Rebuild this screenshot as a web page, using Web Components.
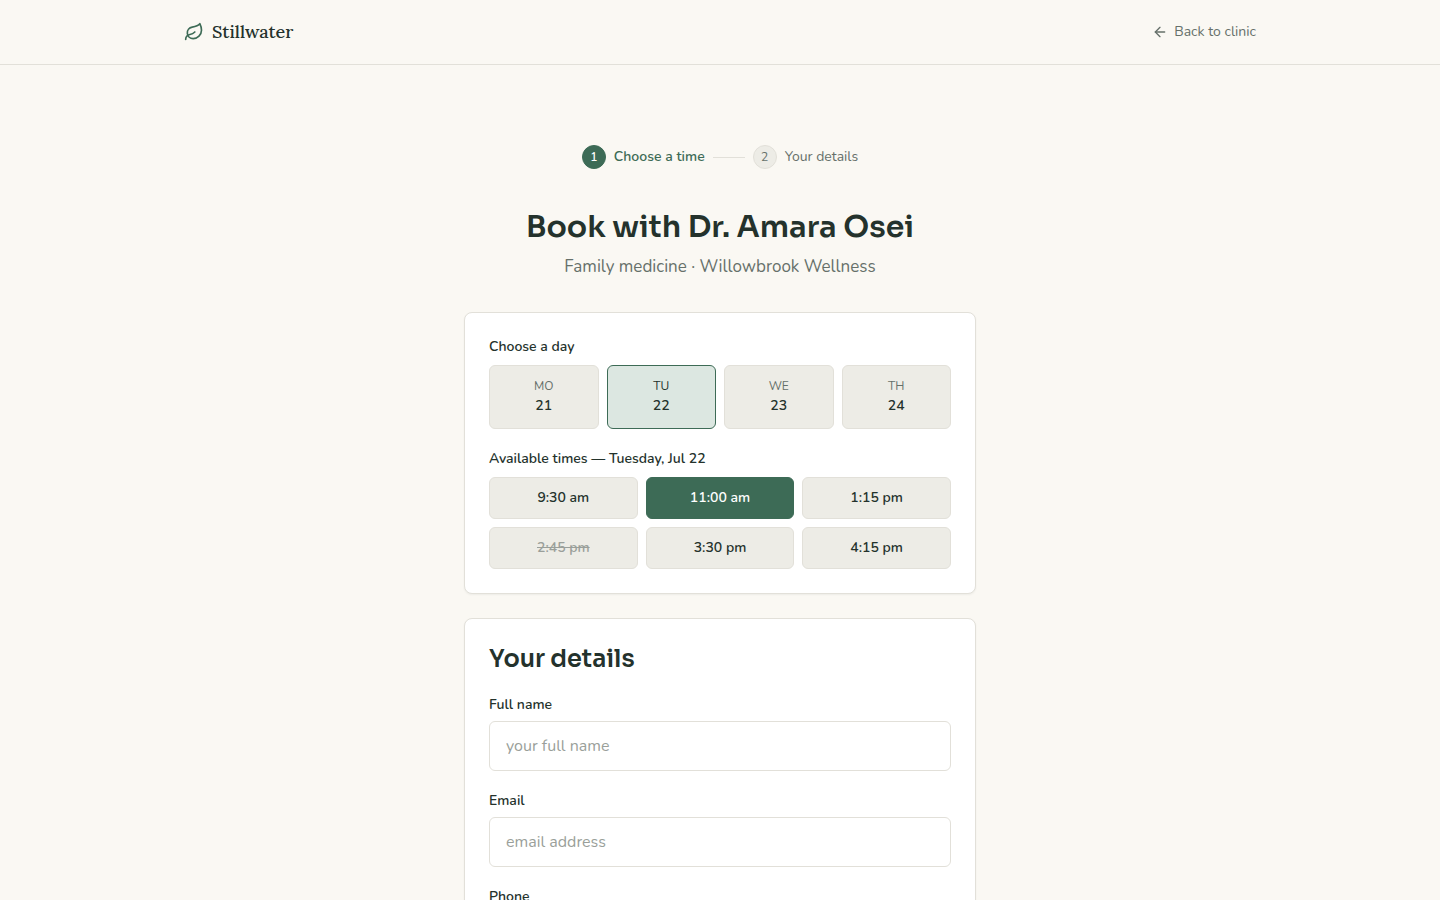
<!DOCTYPE html>
<html lang="en">
<head>
<meta charset="utf-8">
<meta name="viewport" content="width=device-width, initial-scale=1">
<title>Book with Dr. Amara Osei · Stillwater</title>
<style>
:root {
  --bg: #faf8f3;
  --card: #ffffff;
  --line: #e2e0d9;
  --soft: #edece6;
  --ink: #24322c;
  --muted: #66706a;
  --faint: #9a9f9a;
  --green: #3d6b56;
  --tint: #dce7e1;
  --body-font: Nunito, Lato, sans-serif;
  --head-font: Sora, Inter, sans-serif;
  --logo-font: Lora, "Liberation Serif", serif;
}
body {
  margin: 0;
  background: var(--bg);
  color: var(--ink);
  font: 400 14px/20px var(--body-font);
}
</style>
</head>
<body>
<booking-page></booking-page>

<template id="site-header">
  <style>
    :host { display: block; border-bottom: 1px solid var(--line); }
    header { display: flex; align-items: center; justify-content: space-between; box-sizing: border-box; max-width: 1120px; height: 64px; margin: 0 auto; padding: 0 24px; }
    a { display: flex; align-items: center; gap: 8px; color: inherit; text-decoration: none; }
    .logo { font: 500 18px/28px var(--logo-font); }
    .logo svg { color: var(--green); }
    .back { gap: 6px; color: var(--muted); font-size: 14px; }
    svg { display: block; fill: none; stroke: currentColor; stroke-width: 2; stroke-linecap: round; stroke-linejoin: round; }
  </style>
  <header>
    <a class="logo" href="#">
      <svg width="20" height="20" viewBox="0 0 24 24" aria-hidden="true"><path d="M11 20A7 7 0 0 1 9.8 6.1C15.5 5 17 4.48 19 2c1 2 2 4.18 2 8 0 5.5-4.78 10-10 10Z"/><path d="M2 21c0-3 1.85-5.36 5.08-6C9.5 14.52 12 13 13 12"/></svg>
      <span>Stillwater</span>
    </a>
    <a class="back" href="#">
      <svg width="16" height="16" viewBox="0 0 24 24" aria-hidden="true"><path d="m12 19-7-7 7-7"/><path d="M19 12H5"/></svg>
      <span>Back to clinic</span>
    </a>
  </header>
</template>

<template id="step-item">
  <style>
    :host { display: flex; align-items: center; gap: 8px; color: var(--muted); }
    .dot { display: grid; place-items: center; box-sizing: border-box; width: 24px; height: 24px; border: 1px solid var(--line); border-radius: 50%; background: var(--soft); font-size: 12px; line-height: 16px; }
    :host([current]) { color: var(--green); font-weight: 600; }
    :host([current]) .dot { background: var(--green); border-color: var(--green); color: #fff; }
  </style>
  <span class="dot"></span><slot></slot>
</template>

<template id="panel-card">
  <style>
    :host { display: flex; flex-direction: column; gap: 20px; padding: 24px; border: 1px solid var(--line); border-radius: 8px; background: var(--card); box-shadow: 0 1px 2px rgba(36, 50, 44, .06); }
  </style>
  <slot></slot>
</template>

<template id="option-group">
  <style>
    :host { display: block; }
    .label { margin-bottom: 8px; font-weight: 600; }
    .grid { display: grid; grid-template-columns: repeat(var(--columns, 3), minmax(0, 1fr)); gap: 8px; }
  </style>
  <div class="label" id="label"></div>
  <div class="grid" role="group" aria-labelledby="label"><slot></slot></div>
</template>

<template id="day-option">
  <style>
    :host { display: block; }
    button { display: flex; flex-direction: column; align-items: center; justify-content: center; gap: 2px; width: 100%; height: 64px; padding: 0; border: 1px solid var(--line); border-radius: 6px; background: var(--soft); color: inherit; font: inherit; cursor: pointer; }
    .day { color: var(--muted); font-size: 12px; line-height: 16px; }
    .date { font-weight: 600; font-size: 14px; line-height: 20px; }
    button[aria-pressed="true"] { border-color: var(--green); background: var(--tint); }
    button[aria-pressed="true"] .day { color: var(--ink); }
  </style>
  <button type="button"><span class="day"></span><span class="date"></span></button>
</template>

<template id="time-option">
  <style>
    :host { display: block; }
    button { width: 100%; height: 42px; padding: 0; border: 1px solid var(--line); border-radius: 6px; background: var(--soft); color: inherit; font: inherit; font-weight: 600; cursor: pointer; }
    button[aria-pressed="true"] { border-color: var(--green); background: var(--green); color: #fff; }
    button:disabled { color: var(--faint); text-decoration: line-through; cursor: not-allowed; }
  </style>
  <button type="button"><slot></slot></button>
</template>

<template id="text-field">
  <style>
    :host { display: flex; flex-direction: column; gap: 6px; }
    label { font-weight: 600; }
    input { box-sizing: border-box; width: 100%; height: 50px; padding: 0 16px; border: 1px solid var(--line); border-radius: 6px; background: var(--card); color: var(--ink); font: 400 16px/24px var(--body-font); }
    input::placeholder { color: var(--faint); opacity: 1; }
  </style>
  <label for="field"></label><input id="field">
</template>

<template id="booking-page">
  <style>
    :host { display: block; }
    main { display: flex; flex-direction: column; gap: 24px; box-sizing: border-box; max-width: 560px; margin: 0 auto; padding: 80px 24px; }
    .intro { display: flex; flex-direction: column; gap: 8px; margin-bottom: 8px; text-align: center; }
    .steps { display: flex; align-items: center; justify-content: center; gap: 8px; margin-bottom: 32px; }
    .rule { width: 32px; height: 1px; background: var(--line); }
    h1, h2, p { margin: 0; }
    h1 { font: 600 30px/36px var(--head-font); }
    h2 { font: 600 24px/32px var(--head-font); }
    p { color: var(--muted); font-size: 17px; line-height: 27px; }
  </style>
  <site-header></site-header>
  <main>
    <div class="intro">
      <div class="steps">
        <step-item number="1" current>Choose a time</step-item>
        <span class="rule"></span>
        <step-item number="2">Your details</step-item>
      </div>
      <h1>Book with Dr. Amara Osei</h1>
      <p>Family medicine · Willowbrook Wellness</p>
    </div>
    <panel-card>
      <option-group label="Choose a day" columns="4">
        <day-option day="MO" date="21"></day-option>
        <day-option day="TU" date="22" selected></day-option>
        <day-option day="WE" date="23"></day-option>
        <day-option day="TH" date="24"></day-option>
      </option-group>
      <option-group label="Available times — Tuesday, Jul 22" columns="3">
        <time-option>9:30 am</time-option>
        <time-option selected>11:00 am</time-option>
        <time-option>1:15 pm</time-option>
        <time-option disabled>2:45 pm</time-option>
        <time-option>3:30 pm</time-option>
        <time-option>4:15 pm</time-option>
      </option-group>
    </panel-card>
    <panel-card>
      <h2>Your details</h2>
      <text-field label="Full name" placeholder="your full name" type="text"></text-field>
      <text-field label="Email" placeholder="email address" type="email"></text-field>
      <text-field label="Phone" type="tel"></text-field>
    </panel-card>
  </main>
</template>

<script>
class TemplateElement extends HTMLElement {
  connectedCallback() {
    if (this.shadowRoot) return;
    const root = this.attachShadow({ mode: "open" });
    root.append(document.getElementById(this.localName).content.cloneNode(true));
    this.setup(root);
  }
  setup() {}
}
class SiteHeader extends TemplateElement {}
class PanelCard extends TemplateElement {}
class BookingPage extends TemplateElement {}
class StepItem extends TemplateElement {
  setup(root) {
    root.querySelector(".dot").textContent = this.getAttribute("number");
    if (this.hasAttribute("current")) this.setAttribute("aria-current", "step");
  }
}
class OptionGroup extends TemplateElement {
  setup(root) {
    root.querySelector(".label").textContent = this.getAttribute("label");
    root.querySelector(".grid").style.setProperty("--columns", this.getAttribute("columns"));
    this.addEventListener("click", (event) => {
      const option = event.target.closest("day-option, time-option");
      if (!option || option.hasAttribute("disabled")) return;
      for (const child of this.children) child.press(child === option);
    });
  }
}
class OptionElement extends TemplateElement {
  setup(root) {
    this.button = root.querySelector("button");
    this.button.disabled = this.hasAttribute("disabled");
    this.press(this.hasAttribute("selected"));
  }
  press(on) { this.button.setAttribute("aria-pressed", String(on)); }
}
class DayOption extends OptionElement {
  setup(root) {
    super.setup(root);
    root.querySelector(".day").textContent = this.getAttribute("day");
    root.querySelector(".date").textContent = this.getAttribute("date");
  }
}
class TimeOption extends OptionElement {}
class TextField extends TemplateElement {
  setup(root) {
    const input = root.querySelector("input");
    root.querySelector("label").textContent = this.getAttribute("label");
    input.type = this.getAttribute("type") || "text";
    input.placeholder = this.getAttribute("placeholder") || "";
  }
}
customElements.define("site-header", SiteHeader);
customElements.define("step-item", StepItem);
customElements.define("panel-card", PanelCard);
customElements.define("option-group", OptionGroup);
customElements.define("day-option", DayOption);
customElements.define("time-option", TimeOption);
customElements.define("text-field", TextField);
customElements.define("booking-page", BookingPage);
</script>
</body>
</html>
